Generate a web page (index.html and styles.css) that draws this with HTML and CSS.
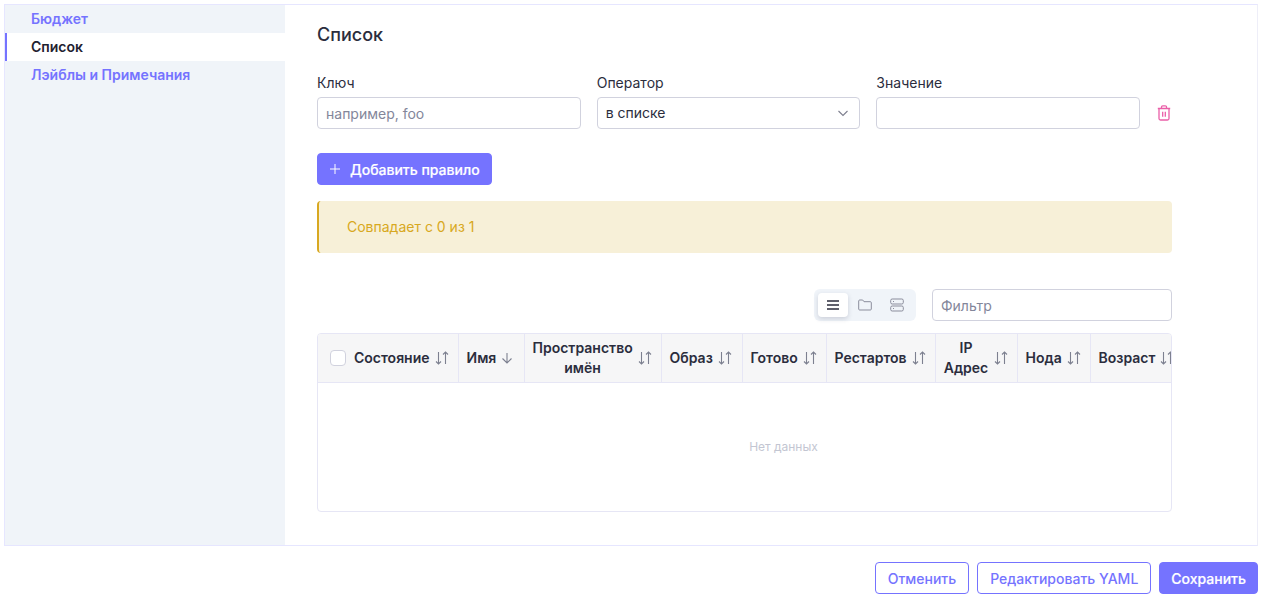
FILE: index.html
```html
<!DOCTYPE html>
<html lang="ru">
<head>
    <meta charset="UTF-8">
    <title>Список</title>
    <link rel="stylesheet" href="styles.css">
</head>
<body>
    <svg class="defs" width="0" height="0">
        <symbol id="sort" viewBox="0 0 15 14">
            <path d="M3.500 1v12M1 10.500l2.500 2.500 2.500-2.500M10.500 13V1M8 3.500l2.500-2.500 2.500 2.500" fill="none" stroke="#7d8090" stroke-width="1.100"/>
        </symbol>
    </svg>

    <div class="page">
        <div class="panel">
            <!-- Вкладки -->
            <ul class="tabs">
                <li class="tab">Бюджет</li>
                <li class="tab active">Список</li>
                <li class="tab">Лэйблы и Примечания</li>
            </ul>

            <div class="content">
                <h2>Список</h2>

                <div class="rule">
                    <div class="field">
                        <label>Ключ</label>
                        <div class="input placeholder">например, foo</div>
                    </div>
                    <div class="field">
                        <label>Оператор</label>
                        <div class="input select">
                            <span>в списке</span>
                            <svg width="12" height="12" viewBox="0 0 12 12" fill="none" stroke="#7d7f8e" stroke-width="1.100"><path d="M1.500 4l4.500 4.500L10.500 4"/></svg>
                        </div>
                    </div>
                    <div class="field">
                        <label>Значение</label>
                        <div class="input"></div>
                    </div>
                    <div class="remove">
                        <svg width="14" height="16" viewBox="0 0 14 16" fill="none" stroke="#ea5fa8" stroke-width="1.300"><path d="M.8 3.500h12.400M2 3.500v10a1.500 1.500 0 0 0 1.500 1.500h7a1.500 1.500 0 0 0 1.500-1.500v-10M4.500 3.500v-1.500a1.200 1.200 0 0 1 1.200-1.200h2.600a1.200 1.200 0 0 1 1.200 1.200v1.500M5.700 6.800v5M8.300 6.800v5"/></svg>
                    </div>
                </div>

                <button class="btn primary add">
                    <svg width="10" height="10" viewBox="0 0 10 10" stroke="#fff" stroke-width="1"><path d="M5 0v10M0 5h10"/></svg>
                    Добавить правило
                </button>

                <div class="banner">Совпадает с 0 из 1</div>

                <div class="toolbar">
                    <div class="switcher">
                        <div class="switch on">
                            <svg width="14" height="12" viewBox="0 0 14 12" stroke="#2b2d3d" stroke-width="1.400"><path d="M1 2h12M1 6h12M1 10h12"/></svg>
                        </div>
                        <div class="switch">
                            <svg width="14" height="12" viewBox="0 0 14 12" fill="none" stroke="#8b8d9c" stroke-width="1"><path d="M.7 2a1 1 0 0 1 1-1h3l1.300 1.700h6.300a1 1 0 0 1 1 1v6.300a1 1 0 0 1-1 1H1.700a1 1 0 0 1-1-1z"/></svg>
                        </div>
                        <div class="switch">
                            <svg width="14" height="14" viewBox="0 0 14 14" fill="none" stroke="#8b8d9c" stroke-width="1"><rect x=".7" y="1" width="12.600" height="5" rx="1.500"/><rect x=".7" y="8" width="12.600" height="5" rx="1.500"/><path d="M3 3.500h1M3 10.500h1"/></svg>
                        </div>
                    </div>
                    <div class="input filter placeholder">Фильтр</div>
                </div>

                <div class="table-wrap">
                    <table>
                        <thead>
                            <tr>
                                <th class="c-state"><div class="th"><span class="check"></span><span>Состояние</span><svg class="sort"><use href="#sort"/></svg></div></th>
                                <th class="c-name"><div class="th"><span>Имя</span><svg class="sort-one" width="12" height="12" viewBox="0 0 12 12" fill="none" stroke="#7d8090" stroke-width="1.100"><path d="M6 1v10M1.500 6.500L6 11l4.500-4.500"/></svg></div></th>
                                <th class="c-ns"><div class="th"><span>Пространство имён</span><svg class="sort"><use href="#sort"/></svg></div></th>
                                <th class="c-image"><div class="th"><span>Образ</span><svg class="sort"><use href="#sort"/></svg></div></th>
                                <th class="c-ready"><div class="th"><span>Готово</span><svg class="sort"><use href="#sort"/></svg></div></th>
                                <th class="c-restarts"><div class="th"><span>Рестартов</span><svg class="sort"><use href="#sort"/></svg></div></th>
                                <th class="c-ip"><div class="th"><span>IP Адрес</span><svg class="sort"><use href="#sort"/></svg></div></th>
                                <th class="c-node"><div class="th"><span>Нода</span><svg class="sort"><use href="#sort"/></svg></div></th>
                                <th class="c-age"><div class="th"><span>Возраст</span><svg class="sort"><use href="#sort"/></svg></div></th>
                            </tr>
                        </thead>
                    </table>
                    <div class="empty">Нет данных</div>
                </div>
            </div>
        </div>

        <div class="footer">
            <button class="btn outline">Отменить</button>
            <button class="btn outline">Редактировать YAML</button>
            <button class="btn primary save">Сохранить</button>
        </div>
    </div>
</body>
</html>
```

FILE: styles.css
```css
* {
    box-sizing: border-box;
}
html, body {
    height: 100%;
}
body {
    margin: 0;
    background: #fff;
    color: #2b2d3d;
    font-family: Inter, 'Noto Sans', sans-serif;
    font-size: 14px;
    overflow: hidden;
}
.defs {
    display: block;
    height: 0;
}
.page {
    height: 600px;
    padding: 4px 10px 6px 4px;
    display: flex;
    flex-direction: column;
}
.panel {
    height: 542px;
    display: flex;
    border: 1px solid #e6e6ff;
    border-right-color: #eeeef8;
}
/* Вкладки */
.tabs {
    width: 280px;
    margin: 0;
    padding: 0;
    list-style: none;
    background: #f0f4f9;
}
.tab {
    height: 28px;
    padding-left: 26px;
    line-height: 28px;
    color: #7573ff;
    font-weight: 600;
    font-size: 14px;
}
.tab.active {
    background: #fff;
    color: #1f2130;
    border-left: 2px solid #7573ff;
    padding-left: 24px;
}
.content {
    flex: 1;
    min-width: 0;
    padding: 18px 85px 0 32px;
}
h2 {
    margin: 0;
    height: 24px;
    font-size: 18px;
    line-height: 24px;
    font-weight: 500;
    color: #2b2d3d;
}
.rule {
    display: flex;
    gap: 16px;
    margin-top: 26px;
}
.field {
    width: 264px;
}
.field label {
    display: block;
    height: 20px;
    margin-bottom: 4px;
    line-height: 20px;
    font-size: 14px;
    color: #2b2d3d;
}
.input {
    height: 32px;
    padding: 0 8px;
    border: 1px solid #d1d2de;
    border-radius: 4px;
    background: #fff;
    line-height: 32px;
    font-size: 14px;
}
.placeholder {
    color: #83869a;
}
.select {
    display: flex;
    align-items: center;
    justify-content: space-between;
    padding-right: 10px;
}
.remove {
    width: 16px;
    padding-top: 32px;
    display: flex;
    justify-content: center;
}
.remove svg {
    display: block;
}
.btn {
    height: 32px;
    border-radius: 4px;
    font-family: inherit;
    font-size: 14px;
    font-weight: 500;
    cursor: pointer;
}
.primary {
    background: #7573ff;
    color: #fff;
    border: 1px solid #7573ff;
    -webkit-text-stroke: 0.2px #fff;
}
.outline {
    background: #fff;
    color: #7573ff;
    border: 1px solid #7573ff;
    padding: 0 12px;
}
.add {
    display: flex;
    align-items: center;
    gap: 10px;
    margin-top: 24px;
    padding: 0 11px 0 12px;
}
.banner {
    height: 52px;
    margin-top: 16px;
    padding-left: 28px;
    line-height: 52px;
    background: #f7f0d8;
    color: #d8a821;
    font-size: 14px;
    border-left: 2px solid #d8a821;
    border-radius: 4px;
}
.toolbar {
    display: flex;
    justify-content: flex-end;
    align-items: center;
    gap: 16px;
    margin-top: 36px;
}
.switcher {
    display: flex;
    align-items: center;
    gap: 2px;
    height: 32px;
    padding: 0 4px;
    background: #f0f4f9;
    border-radius: 6px;
}
.switch {
    width: 30px;
    height: 24px;
    display: flex;
    align-items: center;
    justify-content: center;
    border-radius: 4px;
}
.switch.on {
    background: #fff;
    box-shadow: 0 2px 5px rgba(40, 44, 80, 0.18);
}
.filter {
    width: 240px;
}
.table-wrap {
    margin-top: 12px;
    height: 179px;
    border: 1px solid #e6e6f5;
    border-radius: 4px;
    overflow: hidden;
}
table {
    border-collapse: collapse;
    table-layout: fixed;
    width: 879px;
}
th {
    height: 48px;
    padding: 0;
    background: #f6f6f7;
    border-right: 1px solid #e6e6f5;
    border-bottom: 1px solid #e6e6f5;
    font-size: 14px;
    font-weight: 600;
    line-height: 20px;
    color: #2b2d3d;
}
.th {
    display: flex;
    align-items: center;
    gap: 5px;
    padding: 0 8px;
}
.c-state { width: 140px; }
.c-state .th { padding-left: 12px; }
.c-name { width: 66px; }
.c-ns { width: 137px; }
.c-image { width: 81px; }
.c-ready { width: 84px; }
.c-restarts { width: 109px; }
.c-ip { width: 82px; }
.c-node { width: 73px; }
.c-age { width: 107px; }
.check {
    flex: none;
    width: 16px;
    height: 16px;
    margin-right: 3px;
    border: 1px solid #d1d2de;
    border-radius: 4px;
    background: #fff;
}
.sort {
    flex: none;
    width: 15px;
    height: 14px;
}
.sort-one {
    flex: none;
}
.empty {
    height: 127px;
    display: flex;
    align-items: center;
    justify-content: center;
    padding-left: 78px;
    color: #c3c6d2;
    font-size: 12px;
}
.footer {
    display: flex;
    justify-content: flex-end;
    gap: 8px;
    margin-top: 16px;
}
.save {
    padding: 0 11px;
}
```
